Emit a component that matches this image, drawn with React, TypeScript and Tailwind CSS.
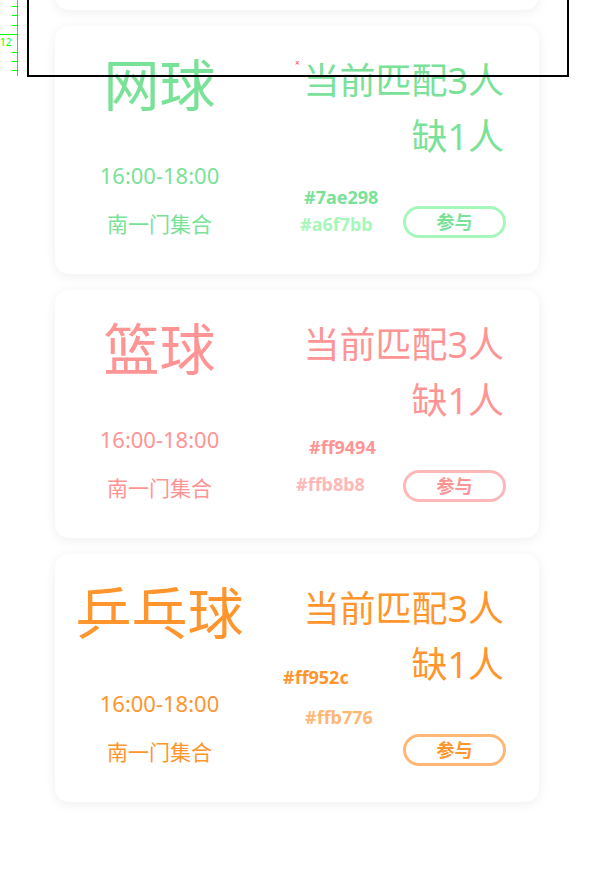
import React from "react";

interface Activity {
  name: string;
  primary: string;
  light: string;
  // where the colour labels sit on the card
  labels: { text: string; color: string; left: number; top: number }[];
}

const activities: Activity[] = [
  {
    name: "网球",
    primary: "#7ae298",
    light: "#a6f7bb",
    labels: [
      { text: "#7ae298", color: "#7ae298", left: 249, top: 159 },
      { text: "#a6f7bb", color: "#a6f7bb", left: 245, top: 186 },
    ],
  },
  {
    name: "篮球",
    primary: "#ff9494",
    light: "#ffb8b8",
    labels: [
      { text: "#ff9494", color: "#ff9494", left: 254, top: 145 },
      { text: "#ffb8b8", color: "#ffb8b8", left: 241, top: 182 },
    ],
  },
  {
    name: "乒乓球",
    primary: "#ff952c",
    light: "#ffb776",
    labels: [
      { text: "#ff952c", color: "#ff952c", left: 228, top: 111 },
      { text: "#ffb776", color: "#ffb776", left: 250, top: 151 },
    ],
  },
];

const cardClass =
  "relative h-[248px] w-[484px] rounded-[14px] bg-white shadow-[0_2px_12px_rgba(0,0,0,0.07)] flex pl-6 pr-[35px]";

const ActivityCard: React.FC<{ item: Activity }> = ({ item }) => (
  <div className={cardClass}>
    {/* left: sport, time, meeting point */}
    <div className="w-[161px] flex flex-col items-center pt-[30px]" style={{ color: item.primary }}>
      <div className="h-[56px] text-[56px] leading-[56px] whitespace-nowrap">{item.name}</div>
      <div className="mt-[49px] h-[28px] text-[22px] leading-[28px] whitespace-nowrap">16:00-18:00</div>
      <div className="mt-[21px] h-[28px] text-[21px] leading-[28px] whitespace-nowrap">南一门集合</div>
    </div>

    {/* right: match status + join */}
    <div className="flex-1 flex flex-col items-end pt-[27px]" style={{ color: item.primary }}>
      <div className="h-[56px] text-[36px] leading-[56px] whitespace-nowrap">当前匹配3人</div>
      <div className="h-[56px] text-[36px] leading-[56px]">缺1人</div>
      <button
        className="mt-[41px] mr-[-2px] h-[32px] w-[103px] rounded-full border-[3px] bg-white text-[18px] font-bold leading-none"
        style={{ borderColor: item.light, color: item.primary }}
      >
        参与
      </button>
    </div>

    {item.labels.map((l) => (
      <span
        key={l.text}
        className="absolute text-[18px] font-bold leading-[24px]"
        style={{ left: l.left, top: l.top, color: l.color }}
      >
        {l.text}
      </span>
    ))}
  </div>
);

export default function App() {
  return (
    <div
      className="relative h-[871px] w-[596px] overflow-hidden bg-white"
      style={{ fontFamily: '"Noto Sans", "Noto Sans CJK SC", sans-serif' }}
    >
      {/* list scrolled down: only the bottom edge of the previous card shows */}
      <div className="mt-[-238px] flex flex-col items-start gap-4 pl-[55px]">
        <div className={cardClass} />
        {activities.map((a) => (
          <ActivityCard key={a.name} item={a} />
        ))}
      </div>

      {/* inspector overlay */}
      <div className="absolute left-[27px] top-[-10px] h-[87px] w-[542px] border-2 border-black" />
      <div className="absolute left-[295px] top-[59px] text-[8px] leading-none text-[#ff3b3b]">×</div>
      <div className="absolute left-0 top-0 h-[76px] w-[18px]">
        <div className="absolute left-[17px] top-0 h-[76px] w-px bg-[#00ff00]" />
        {[6, 15, 25, 52, 61, 70].map((y) => (
          <div key={y} className="absolute left-[12px] h-px w-[6px] bg-[#00ff00]" style={{ top: y }} />
        ))}
        <div className="absolute left-0 top-[34px] h-px w-[18px] bg-[#00ff00]" />
        <div className="absolute left-0 top-[37px] text-[10px] leading-[10px] text-[#00ff00]">12</div>
      </div>
    </div>
  );
}
